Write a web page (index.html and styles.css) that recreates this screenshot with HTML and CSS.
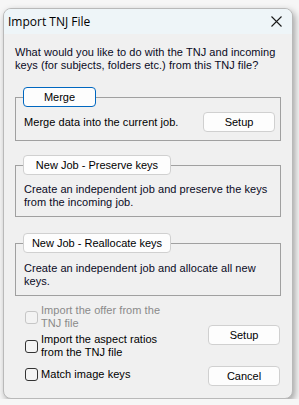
FILE: index.html
```html
<!DOCTYPE html>
<html lang="en">
<head>
    <meta charset="UTF-8">
    <meta name="viewport" content="width=device-width, initial-scale=1.0">
    <title>Import TNJ File</title>
    <link rel="stylesheet" href="styles.css">
</head>
<body>
    <div class="window">
        <div class="titlebar">
            <span class="title">Import TNJ File</span>
            <svg class="close" width="11" height="11" viewBox="0 0 11 11">
                <path d="M0.5 0.5 L10.5 10.5 M10.5 0.5 L0.5 10.5" stroke="#1a1a1a" stroke-width="1.1" fill="none"/>
            </svg>
        </div>

        <div class="content">
            <p class="intro">What would you like to do with the TNJ and incoming keys (for subjects, folders etc.) from this TNJ file?</p>

            <fieldset class="group group-merge">
                <legend><button class="button focused legend-btn short">Merge</button></legend>
                <div class="row">
                    <span>Merge data into the current job.</span>
                    <button class="button">Setup</button>
                </div>
            </fieldset>

            <fieldset class="group group-preserve">
                <legend><button class="button legend-btn">New Job - Preserve keys</button></legend>
                <p>Create an independent job and preserve the keys from the incoming job.</p>
            </fieldset>

            <fieldset class="group group-realloc">
                <legend><button class="button legend-btn">New Job - Reallocate keys</button></legend>
                <p>Create an independent job and allocate all new keys.</p>
            </fieldset>

            <div class="bottom">
                <div class="checks">
                    <label class="check disabled"><span class="box"></span><span>Import the offer from the TNJ file</span></label>
                    <label class="check second"><span class="box"></span><span>Import the aspect ratios from the TNJ file</span></label>
                    <label class="check third"><span class="box"></span><span>Match image keys</span></label>
                </div>
                <div class="actions">
                    <button class="button">Setup</button>
                    <button class="button cancel">Cancel</button>
                </div>
            </div>
        </div>
    </div>
</body>
</html>
```

FILE: styles.css
```css
* {
    margin: 0;
    padding: 0;
    box-sizing: border-box;
}

body {
    background: #f6f6f6;
    font-family: 'Liberation Sans', Arial, sans-serif;
    font-size: 11px;
    line-height: 13px;
    letter-spacing: 0.05px;
    color: #000;
    overflow: hidden;
}

.window {
    margin: 8px 0 0 3px;
    width: 290px;
    height: 391px;
    background: #f0f0f0;
    border: 1px solid #b9b9b9;
    border-radius: 8px;
    box-shadow: 2px 3px 7px rgba(0, 0, 0, 0.35);
    overflow: hidden;
}

.titlebar {
    height: 25px;
    background: #eef5f8;
    display: flex;
    align-items: center;
    justify-content: space-between;
    padding: 0 10px 0 4px;
}

.title {
    font-family: 'Open Sans', 'Liberation Sans', sans-serif;
    font-size: 12px;
    letter-spacing: 0;
}

.close {
    margin-top: -1px;
}

.content {
    padding: 0 10px 0 11px;
}

.intro {
    margin-top: 12px;
    color: #0a0a1e;
}

.group {
    border: 1px solid #a0a0a0;
    padding: 5px 5px 8px 8px;
    width: 266px;
}

.group legend {
    margin-left: -1px;
    padding: 0;
}

.group p {
    color: #0a0a1e;
}

.group-merge {
    margin-top: 15px;
}

.group-preserve {
    margin-top: 14px;
    padding-top: 8px;
    padding-bottom: 7px;
}

.group-realloc {
    margin-top: 16px;
    padding-top: 9px;
    padding-bottom: 7px;
}

.row {
    display: flex;
    align-items: center;
    justify-content: space-between;
}

.button {
    font-family: 'Liberation Sans', Arial, sans-serif;
    font-size: 11px;
    color: #000;
    background: #fdfdfd;
    border: 1px solid #d0d0d0;
    border-radius: 4px;
    width: 72px;
    height: 20px;
    display: flex;
    align-items: center;
    justify-content: center;
}

.legend-btn {
    width: 148px;
}

.legend-btn.short {
    width: 73px;
}

.focused {
    border-color: #0067c0;
}

.bottom {
    margin-top: 8px;
    display: flex;
    justify-content: space-between;
}

.checks {
    display: flex;
    flex-direction: column;
    margin-left: 10px;
}

.check {
    display: flex;
    align-items: center;
    gap: 3px;
    width: 142px;
}

.check.second {
    margin-top: 3px;
}

.check.third {
    margin-top: 9px;
}

.box {
    flex: none;
    width: 13px;
    height: 13px;
    border: 1px solid #333;
    border-radius: 3px;
    background: #f4f4f4;
}

.check.disabled {
    color: #8a8a8a;
}

.check.disabled .box {
    border-color: #c6c6c6;
    background: #f3f3f3;
}

.actions {
    display: flex;
    flex-direction: column;
    padding-top: 21px;
    margin-right: 2px;
}

.actions .cancel {
    margin-top: 21px;
}
```
